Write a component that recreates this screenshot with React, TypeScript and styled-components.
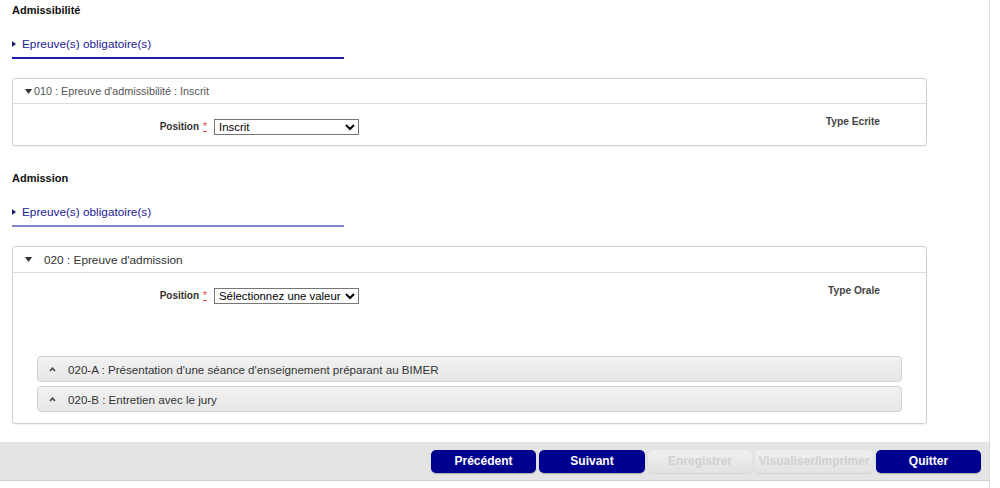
import styled, { createGlobalStyle } from 'styled-components';

const GlobalStyle = createGlobalStyle`
  body {
    margin: 0;
    background: #fff;
    font-family: "Liberation Sans", Arial, sans-serif;
    font-size: 11px;
    color: #222;
  }
`;

const Page = styled.div`
  width: 990px;
  box-sizing: border-box;
  border-right: 1px solid #d9d9d9;
  min-height: 488px;
`;

const Content = styled.div`
  padding: 3px 62px 0 12px;
  display: flex;
  flex-direction: column;
`;

const SectionTitle = styled.div<{ $top?: number }>`
  font-weight: bold;
  font-size: 11px;
  line-height: 14px;
  color: #111;
  margin-top: ${p => p.$top ?? 0}px;
`;

const GroupToggle = styled.div<{ $line: string }>`
  width: 332px;
  margin-top: 20px;
  padding-bottom: 6px;
  border-bottom: 2px solid ${p => p.$line};
  display: flex;
  align-items: center;
  gap: 6px;
  color: #1a1a96;
  font-size: 11.8px;
  line-height: 14px;
`;

const Panel = styled.div<{ $top: number }>`
  margin-top: ${p => p.$top}px;
  border: 1px solid #cfcfcf;
  border-radius: 3px;
  box-shadow: 0 1px 1px rgba(0, 0, 0, 0.06);
`;

const PanelHeader = styled.div<{ $big?: boolean }>`
  height: ${p => (p.$big ? 25 : 24)}px;
  border-bottom: 1px solid #dcdcdc;
  display: flex;
  align-items: center;
  padding-left: 12px;
  gap: ${p => (p.$big ? 12 : 2)}px;
  font-size: ${p => (p.$big ? 11.8 : 10.8)}px;
  color: ${p => (p.$big ? '#333' : '#555')};
`;

const PanelBody = styled.div<{ $bottom: number }>`
  padding: 15px 0 ${p => p.$bottom}px 0;
`;

const FieldRow = styled.div`
  display: flex;
  align-items: flex-start;
  padding-right: 46px;
`;

const Field = styled.div`
  display: flex;
  align-items: center;
  flex: 1;
`;

const Label = styled.label`
  width: 194px;
  text-align: right;
  font-weight: bold;
  color: #333;
  font-size: 10px;
  margin-top: -2px;
`;

const Required = styled.span`
  color: #d9463d;
  text-decoration: underline;
  margin-left: 4px;
  font-weight: normal;
`;

const Select = styled.select`
  margin-left: 7px;
  width: 145px;
  height: 16px;
  font-family: "Liberation Sans", Arial, sans-serif;
  font-size: 11.4px;
  color: #000;
  border: 1px solid #767676;
  border-radius: 0;
  padding: 0;
  background: #fff;
`;

const TypeText = styled.div`
  font-weight: bold;
  color: #444;
  font-size: 10.2px;
  line-height: 14px;
  margin-top: -4px;
`;

const SubList = styled.div`
  margin: 52px 24px 0 24px;
  display: flex;
  flex-direction: column;
  gap: 4px;
`;

const SubPanel = styled.div`
  height: 24px;
  border: 1px solid #d2d2d2;
  border-radius: 4px;
  background: linear-gradient(#f2f2f2, #e6e6e6);
  display: flex;
  align-items: center;
  padding-left: 11px;
  gap: 12px;
  font-size: 11.6px;
  color: #333;
`;

const Footer = styled.div`
  margin-top: 18px;
  height: 38px;
  background: #e4e4e4;
  border-bottom: 1px solid #cfcfcf;
  display: flex;
  justify-content: flex-end;
  align-items: center;
  gap: 3px;
  padding-right: 8px;
`;

const Button = styled.button<{ $disabled?: boolean; $w: number }>`
  width: ${p => p.$w}px;
  height: 23px;
  border: none;
  border-radius: 5px;
  font-family: "Liberation Sans", Arial, sans-serif;
  font-weight: bold;
  font-size: 12px;
  padding: 0;
  color: ${p => (p.$disabled ? '#d0d0d0' : '#fff')};
  background: ${p => (p.$disabled ? 'linear-gradient(#efefef, #e2e2e2)' : '#00008f')};
  box-shadow: ${p => (p.$disabled ? '0 1px 1px rgba(0,0,0,0.08)' : '0 1px 1px rgba(0,0,0,0.25)')};
  cursor: ${p => (p.$disabled ? 'default' : 'pointer')};
`;

const ArrowRight = () => (
  <svg width="4" height="6" viewBox="0 0 4 6"><polygon points="0,0 4,3 0,6" fill="#1c1c6a" /></svg>
);

const ArrowDown = ({ color }: { color: string }) => (
  <svg width="7" height="5" viewBox="0 0 7 5"><polygon points="0,0 7,0 3.5,5" fill={color} /></svg>
);

const CaretUp = () => (
  <svg width="7" height="5" viewBox="0 0 7 5"><polyline points="1,4 3.5,1.3 6,4" fill="none" stroke="#444" strokeWidth="1.6" /></svg>
);

export default function App() {
  return (
    <Page>
      <GlobalStyle />
      <Content>
        <SectionTitle>Admissibilité</SectionTitle>
        <GroupToggle $line="#1d1da6">
          <ArrowRight />
          Epreuve(s) obligatoire(s)
        </GroupToggle>

        <Panel $top={19}>
          <PanelHeader>
            <ArrowDown color="#333" />
            010 : Epreuve d'admissibilité : Inscrit
          </PanelHeader>
          <PanelBody $bottom={10}>
            <FieldRow>
              <Field>
                <Label>Position<Required>*</Required></Label>
                <Select defaultValue="inscrit">
                  <option value="inscrit">Inscrit</option>
                </Select>
              </Field>
              <TypeText>Type Ecrite</TypeText>
            </FieldRow>
          </PanelBody>
        </Panel>

        <SectionTitle $top={25}>Admission</SectionTitle>
        <GroupToggle $line="#8585cc">
          <ArrowRight />
          Epreuve(s) obligatoire(s)
        </GroupToggle>

        <Panel $top={19}>
          <PanelHeader $big>
            <ArrowDown color="#333" />
            020 : Epreuve d'admission
          </PanelHeader>
          <PanelBody $bottom={11}>
            <FieldRow>
              <Field>
                <Label>Position<Required>*</Required></Label>
                <Select defaultValue="">
                  <option value="">Sélectionnez une valeur</option>
                </Select>
              </Field>
              <TypeText>Type Orale</TypeText>
            </FieldRow>
            <SubList>
              <SubPanel>
                <CaretUp />
                020-A : Présentation d'une séance d'enseignement préparant au BIMER
              </SubPanel>
              <SubPanel>
                <CaretUp />
                020-B : Entretien avec le jury
              </SubPanel>
            </SubList>
          </PanelBody>
        </Panel>
      </Content>
      <Footer>
        <Button $w={105}>Précédent</Button>
        <Button $w={106}>Suivant</Button>
        <Button $w={104} $disabled>Enregistrer</Button>
        <Button $w={118} $disabled>Visualiser/imprimer</Button>
        <Button $w={105}>Quitter</Button>
      </Footer>
    </Page>
  );
}
